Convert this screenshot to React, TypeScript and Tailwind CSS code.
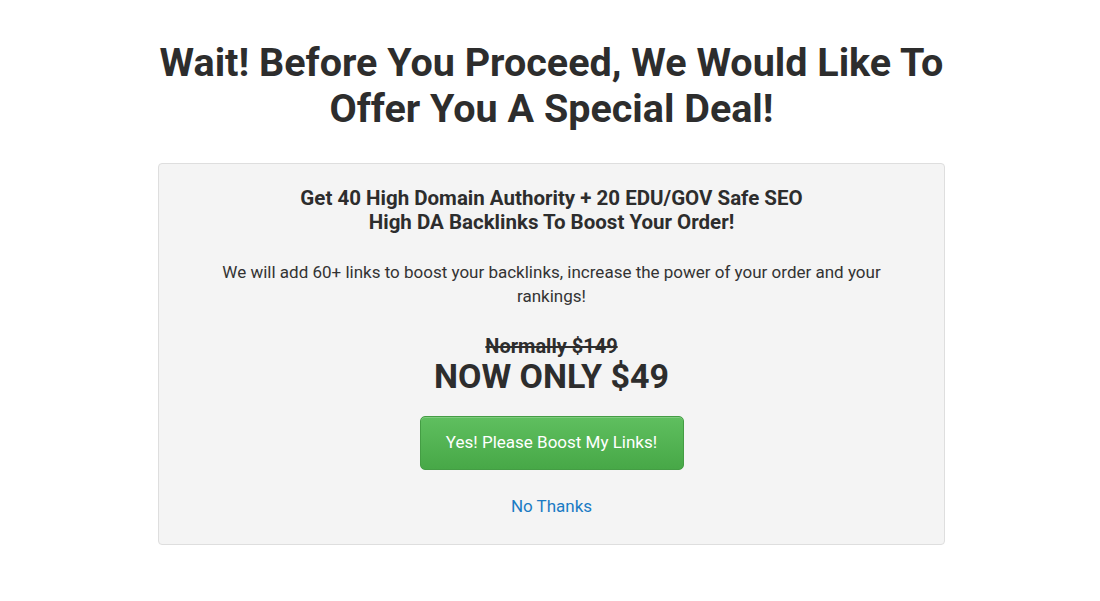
import React from "react";

const App: React.FC = () => {
  return (
    <div className="min-h-[601px] w-full bg-white pl-[3px] font-['Roboto',sans-serif] text-[#333]">
      <div className="mx-auto flex w-[787px] flex-col items-center pt-[40px]">
        <h1 className="text-center text-[39.5px] font-bold leading-[46px] text-[#2d2d2d]">
          Wait! Before You Proceed, We Would Like To
          <br />
          Offer You A Special Deal!
        </h1>

        {/* Offer box */}
        <div className="mt-[31px] flex w-[787px] flex-col items-center rounded-[4px] border border-[#dedede] bg-[#f4f4f4] pt-[22px] pb-[26px] text-center">
          <h2 className="text-[20.5px] font-bold leading-[24px] text-[#2d2d2d]">
            Get 40 High Domain Authority + 20 EDU/GOV Safe SEO
            <br />
            High DA Backlinks To Boost Your Order!
          </h2>
          <p className="mt-[26px] text-[17px] leading-[24px] text-[#333]">
            We will add 60+ links to boost your backlinks, increase the power of your order and your
            <br />
            rankings!
          </p>
          <div className="mt-[26px] text-[20px] font-bold leading-[24px] text-[#2d2d2d] line-through">
            Normally $149
          </div>
          <div className="text-[34px] font-bold leading-[36px] text-[#2d2d2d]">
            NOW ONLY $49
          </div>
          <button className="mt-[22px] h-[54px] w-[264px] rounded-[5px] border border-[#449d44] bg-gradient-to-b from-[#5fbf5f] to-[#47a847] text-[17px] text-white shadow-[inset_0_1px_0_rgba(255,255,255,0.2)]">
            Yes! Please Boost My Links!
          </button>
          <a href="#" className="mt-[24px] text-[17px] leading-[24px] text-[#1a7bc4]">
            No Thanks
          </a>
        </div>
      </div>
    </div>
  );
};

export default App;
